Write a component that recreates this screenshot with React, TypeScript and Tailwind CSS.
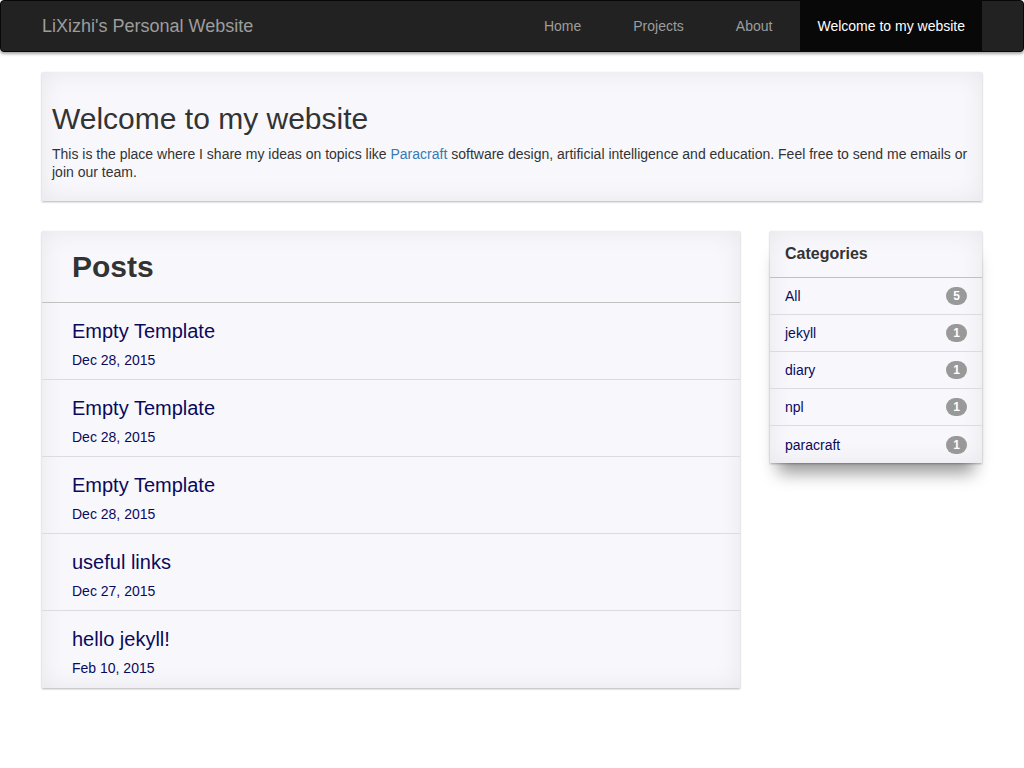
const posts = [
  { title: "Empty Template", date: "Dec 28, 2015" },
  { title: "Empty Template", date: "Dec 28, 2015" },
  { title: "Empty Template", date: "Dec 28, 2015" },
  { title: "useful links", date: "Dec 27, 2015" },
  { title: "hello jekyll!", date: "Feb 10, 2015" },
];

const categories = [
  { name: "All", count: 5 },
  { name: "jekyll", count: 1 },
  { name: "diary", count: 1 },
  { name: "npl", count: 1 },
  { name: "paracraft", count: 1 },
];

const card =
  "bg-[#f8f8fc] shadow-[inset_0_0_24px_rgba(0,0,0,0.07),0_1px_2px_rgba(0,0,0,0.3)]";

export default function App() {
  return (
    <div className="min-h-[768px] bg-white text-[#333] font-['Liberation_Sans',Arial,sans-serif]">
      {/* Navbar */}
      <div className="h-[52px] bg-[#222] border border-[#080808] rounded-[4px] shadow-[0_2px_3px_rgba(0,0,0,0.35)]">
        <div className="w-[940px] mx-auto flex items-stretch h-[50px]">
          <div className="flex items-center text-[18px] text-[#9d9d9d]">LiXizhi's Personal Website</div>
          <div className="ml-auto flex items-stretch text-[14px]">
            <div className="flex items-center px-[26px] text-[#9d9d9d]">Home</div>
            <div className="flex items-center px-[26px] text-[#9d9d9d]">Projects</div>
            <div className="flex items-center pl-[26px] pr-[28px] text-[#9d9d9d]">About</div>
            <div className="flex items-center px-[17px] bg-[#080808] text-white">Welcome to my website</div>
          </div>
        </div>
      </div>

      <div className="w-[940px] mx-auto pt-[20px]">
        {/* Jumbotron */}
        <div className={`${card} px-[10px] pt-[30px] pb-[20px]`}>
          <h1 className="text-[30px] leading-[33px] text-[#333]">Welcome to my website</h1>
          <p className="mt-[10px] text-[14px] leading-[18px] text-[#333]">
            This is the place where I share my ideas on topics like{" "}
            <span className="text-[#337ab7]">Paracraft</span> software design, artificial intelligence and
            education. Feel free to send me emails or join our team.
          </p>
        </div>

        <div className="flex gap-[30px] mt-[30px]">
          {/* Posts */}
          <div className={`${card} w-[698px] self-start`}>
            <div className="h-[72px] px-[30px] flex items-center border-b border-[#c0c0c0]">
              <h2 className="text-[30px] font-bold text-[#333]">Posts</h2>
            </div>
            {posts.map((p, i) => (
              <div
                key={i}
                className={`h-[77px] px-[30px] pt-[15px] ${i < posts.length - 1 ? "border-b border-[#dcdce0]" : ""}`}
              >
                <div className="text-[20px] leading-[26px] text-[#0a0a5c]">{p.title}</div>
                <div className="mt-[7px] text-[14px] leading-[18px] text-[#0a0a5c]">{p.date}</div>
              </div>
            ))}
          </div>

          {/* Categories */}
          <div className="w-[212px] self-start">
            <div className="bg-[#f8f8fc] shadow-[inset_0_0_24px_rgba(0,0,0,0.07),0_1px_2px_rgba(0,0,0,0.3),0_18px_16px_-8px_rgba(0,0,0,0.4)]">
              <div className="h-[47px] px-[15px] flex items-center border-b border-[#c0c0c0]">
                <span className="text-[16px] font-bold text-[#333]">Categories</span>
              </div>
              {categories.map((c, i) => (
                <div
                  key={c.name}
                  className={`h-[37px] pl-[15px] pr-[15px] flex items-center justify-between ${i < categories.length - 1 ? "border-b border-[#dcdce0]" : ""}`}
                >
                  <span className="text-[14px] text-[#0a0a5c] pt-[1px]">{c.name}</span>
                  <span className="w-[21px] h-[18px] rounded-full bg-[#999] text-white text-[12px] font-bold flex items-center justify-center leading-none">
                    {c.count}
                  </span>
                </div>
              ))}
            </div>
          </div>
        </div>
      </div>
    </div>
  );
}
